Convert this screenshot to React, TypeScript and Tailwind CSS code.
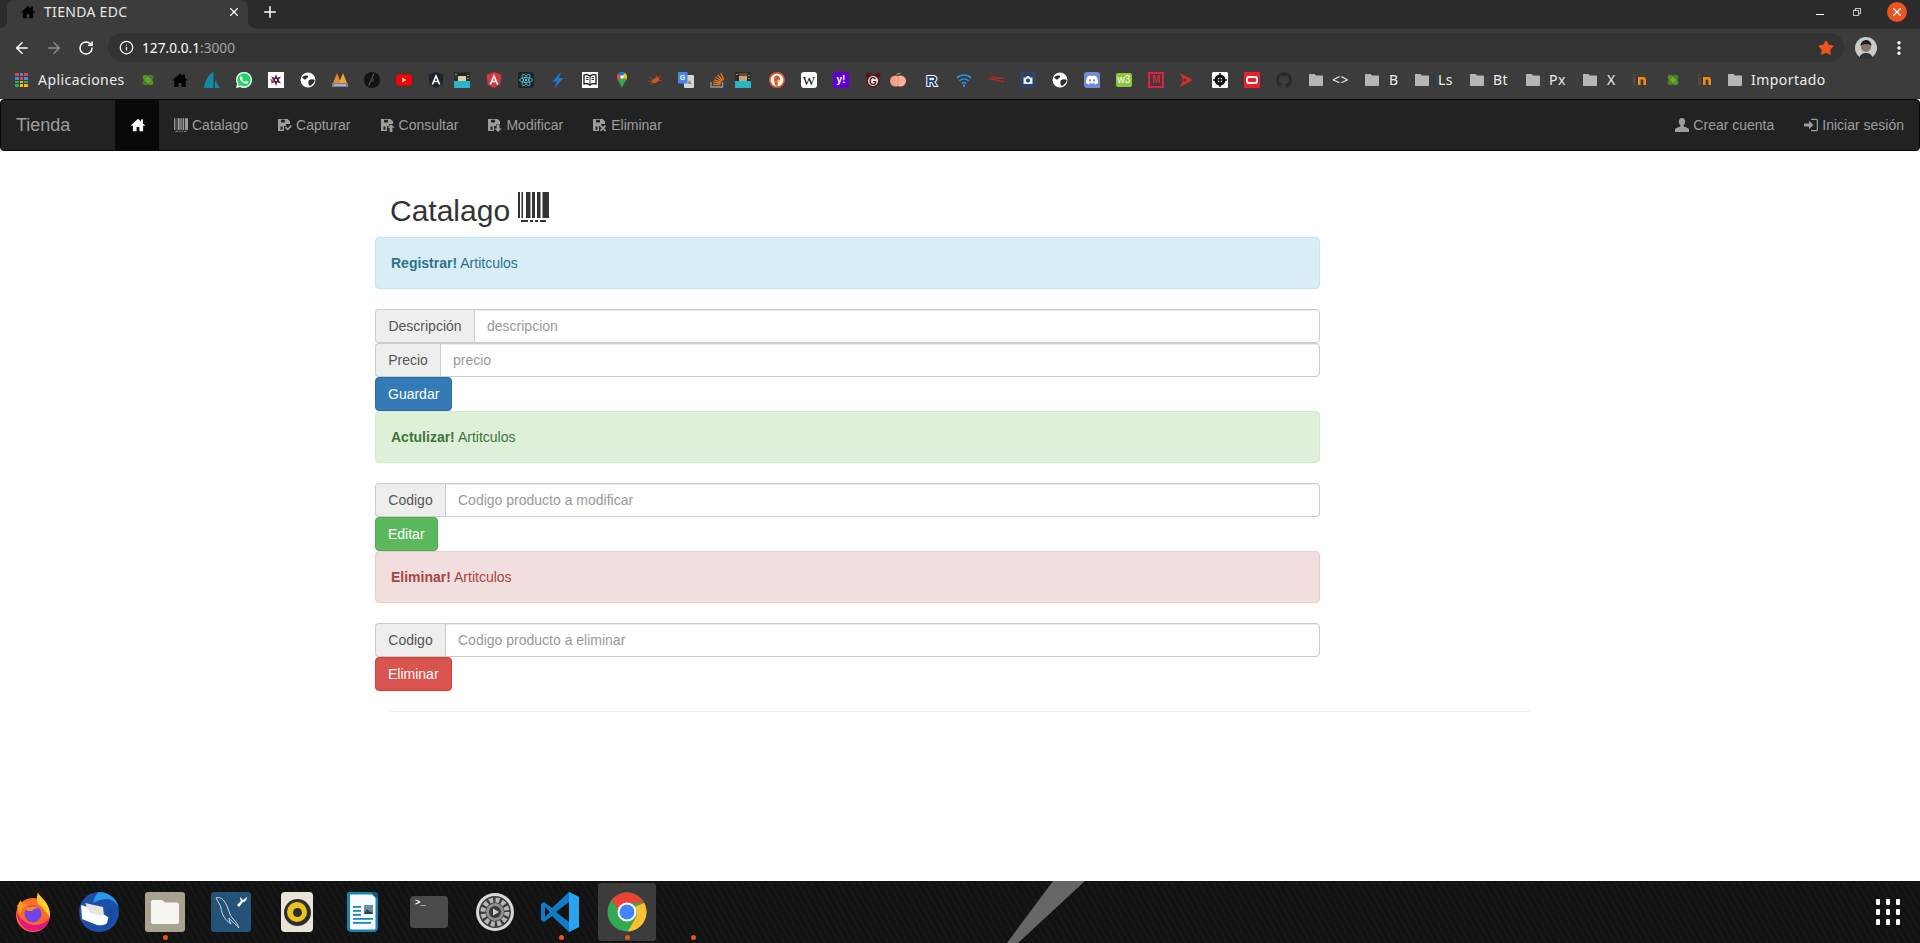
import React from "react";
import { ArrowLeft, ArrowRight, RotateCw, Info, Star, Plus, X, EllipsisVertical } from "lucide-react";
import { SiWhatsapp, SiDiscord, SiGithub } from "react-icons/si";

type IconProps = { className?: string };

/* ---------- glyphicons used by the page ---------- */

const HomeGlyph = ({ className }: IconProps) => (
  <svg viewBox="0 0 14 14" className={className} fill="currentColor">
    <path d="M7 .8 14 7.2l-.9.9-1-.9v6H8.4V9H5.6v4.2H1.9v-6l-1 .9L0 7.2 7 .8z" />
    <rect x="10" y="1.4" width="2" height="3.4" />
  </svg>
);

const BarcodeGlyph = ({ className }: IconProps) => (
  <svg viewBox="0 0 31 30" className={className} fill="currentColor">
    <rect x="0" y="0" width="2" height="26" />
    <rect x="3.5" y="0" width="1.5" height="26" />
    <rect x="8" y="0" width="4.5" height="26" />
    <rect x="14" y="0" width="3" height="26" />
    <rect x="19" y="0" width="3.5" height="26" />
    <rect x="24.5" y="0" width="6.5" height="26" />
    <rect x="3" y="28" width="7" height="2" />
    <rect x="12" y="28" width="3" height="2" />
    <rect x="17" y="28" width="3" height="2" />
    <rect x="22" y="28" width="6" height="2" />
  </svg>
);

const Floppy = ({ className, mark }: IconProps & { mark: React.ReactNode }) => (
  <svg viewBox="0 0 14 14" className={className} fill="currentColor">
    <path d="M0 1h9.5L12 3.2V6H8V8H6v5H0V1zm3 .8v2.7h4V1.8H3zM2.5 8.500v3.3h2V8.500h-2z" fillRule="evenodd" />
    {mark}
  </svg>
);

const UserGlyph = ({ className }: IconProps) => (
  <svg viewBox="0 0 14 14" className={className} fill="currentColor">
    <path d="M7 0c2 0 3.2 1.5 3.2 3.6 0 1.6-.7 3-1.6 3.8v1.1c1.6.7 4.4 1.4 5.4 2.6V14H0v-2.9c1-1.2 3.8-1.9 5.4-2.6V7.4C4.5 6.6 3.8 5.2 3.8 3.6 3.8 1.5 5 0 7 0z" />
  </svg>
);

const LoginGlyph = ({ className }: IconProps) => (
  <svg viewBox="0 0 14 14" className={className} fill="currentColor">
    <path d="M5 2.8 9.4 7 5 11.2V8.6H0V5.4h5V2.8z" />
    <path d="M7 .8h5.2c1 0 1.8.8 1.8 1.8v8.800c0 1-.8 1.800-1.800 1.800H7v-1.200h5c.5 0 .8-.3.8-.8V2.800c0-.5-.3-.8-.8-.8H7V.8z" />
  </svg>
);

const navItems = [
  { label: "Catalago", icon: <BarcodeGlyph className="h-[14px] w-[14px]" /> },
  {
    label: "Capturar",
    icon: <Floppy className="h-[14px] w-[14px]" mark={<path d="M6.8 9.7 8 8.5l1.700 1.700L12.800 7 14 8.200l-4.300 4.400-2.900-2.900z" />} />,
  },
  {
    label: "Consultar",
    icon: <Floppy className="h-[14px] w-[14px]" mark={<path d="M10 6.200l3.700 3.600H11.400V14H8.600V9.800H6.300L10 6.200z" />} />,
  },
  {
    label: "Modificar",
    icon: <Floppy className="h-[14px] w-[14px]" mark={<path d="M10 14l-3.700-3.600h2.300V6.200h2.800v4.200h2.300L10 14z" />} />,
  },
  {
    label: "Eliminar",
    icon: <Floppy className="h-[14px] w-[14px]" mark={<path d="M6.800 8.200 8 7l2 2 2-2 1.200 1.200-2 2 2 2L12 13.400l-2-2-2 2-1.200-1.200 2-2-2-2z" />} />,
  },
];

/* ---------- favicons of the bookmarks bar ---------- */

const Fav = ({ children }: { children: React.ReactNode }) => (
  <svg viewBox="0 0 16 16" className="h-4 w-4">
    {children}
  </svg>
);

const Clover = () => (
  <Fav>
    <circle cx="5.5" cy="5.5" r="2.8" fill="#558f2a" />
    <circle cx="10.5" cy="5.5" r="2.8" fill="#4a8025" />
    <circle cx="5.5" cy="10.5" r="2.8" fill="#4a8025" />
    <circle cx="10.5" cy="10.5" r="2.8" fill="#558f2a" />
    <path d="M8 4.500 11.500 8 8 11.500 4.500 8z" fill="#6da63a" />
  </Fav>
);

const Globe = () => (
  <Fav>
    <circle cx="8" cy="8" r="7.5" fill="#fff" />
    <path d="M2 5c2-1 4-2 6-1 1 1-1 2-2 3s-2 1-4-2zM9 8c2-1 4-1 6 0-1 3-3 5-5 6-2-1-2-4-1-6z" fill="#2f2f2f" />
  </Fav>
);

const PixelGuy = ({ skin }: { skin: string }) => (
  <Fav>
    <rect x="0" y="0" width="16" height="16" fill="#2d2d2d" />
    <rect x="1" y="2" width="2" height="1" fill="#4caf50" />
    <rect x="13" y="3" width="2" height="1" fill="#4caf50" />
    <rect x="13" y="6" width="2" height="1" fill="#4caf50" />
    <rect x="4" y="1" width="8" height="3" fill={skin === "#caa27f" ? "#6a4a32" : "#222"} />
    <rect x="4" y="4" width="8" height="5" fill={skin} />
    <rect x="0" y="9" width="16" height="7" fill="#29b6c8" />
  </Fav>
);

const InLogo = () => (
  <Fav>
    <rect x="1" y="5" width="2.5" height="8" fill="#5a4a3a" />
    <rect x="1" y="2" width="2.5" height="2" fill="#5a4a3a" />
    <path d="M6 13V5h5c2 0 3 1 3 3v5h-2.600V8.300c0-.6-.3-.9-.9-.9H8.600V13H6z" fill="#f08a1d" />
  </Fav>
);

const Folder = () => (
  <svg viewBox="0 0 14 12" className="h-[12px] w-[14px] shrink-0">
    <path d="M1 0h4.500L7 1.500h6c.6 0 1 .4 1 1V11c0 .6-.4 1-1 1H1c-.6 0-1-.4-1-1V1c0-.6.4-1 1-1z" fill="#b6b6b6" />
  </svg>
);

const favicons: { node: React.ReactNode; cls: string }[] = [
  { cls: "", node: <Clover /> },
  {
    cls: "",
    node: (
      <Fav>
        <path d="M8 1.500 16 8.500h-2.300V15H9.600v-4H6.400v4H2.300V8.500H0L8 1.500z" fill="#000" />
        <rect x="11" y="2.5" width="2" height="3.5" fill="#000" />
      </Fav>
    ),
  },
  {
    cls: "",
    node: (
      <Fav>
        <path d="M9.500 0v16H0C1 8 5 2 9.500 0z" fill="#148a9e" />
        <path d="M11 8l5 8h-5V8z" fill="#148a9e" />
      </Fav>
    ),
  },
  {
    cls: "",
    node: (
      <span className="relative flex h-4 w-4 items-center justify-center rounded-full bg-[#25d366]">
        <SiWhatsapp className="h-4 w-4 text-white" />
      </span>
    ),
  },
  {
    cls: "",
    node: (
      <Fav>
        <rect width="16" height="16" fill="#fff" />
        <path d="M8 2l1.300 3.700L13 4.500 10.700 8 13 11.500 9.300 10.300 8 14 6.700 10.300 3 11.500 5.300 8 3 4.500l3.700 1.200z" fill="#4b1f54" />
        <path d="M2 7l5 1-3.500 2.500z" fill="#e2483d" />
        <circle cx="8" cy="8" r="1" fill="#fff" />
      </Fav>
    ),
  },
  { cls: "", node: <Globe /> },
  {
    cls: "",
    node: (
      <Fav>
        <path d="M5 1 9 11H1z" fill="#e28a2c" />
        <path d="M11 1l4 10H7z" fill="#f2a33a" />
        <rect x="0" y="11" width="16" height="4" fill="#77809a" />
        <rect x="2" y="12.5" width="12" height="1" fill="#d8dbe5" />
      </Fav>
    ),
  },
  {
    cls: "",
    node: (
      <Fav>
        <circle cx="8" cy="8" r="8" fill="#111" />
        <path d="M10.500 2 5 14l-1-.6L9.500 1.500z" fill="#555" />
        <circle cx="8" cy="8" r="2" fill="#3a3a3a" />
      </Fav>
    ),
  },
  {
    cls: "",
    node: (
      <Fav>
        <rect x="0" y="2.5" width="16" height="11" rx="3" fill="#f00" />
        <path d="M6.400 5.700 10.400 8l-4 2.300z" fill="#fff" />
      </Fav>
    ),
  },
  {
    cls: "",
    node: (
      <Fav>
        <path d="M8 0l7.500 2.700-1.200 9.900L8 16l-6.300-3.400L.5 2.700z" fill="#1b2430" />
        <path d="M8 2 3.500 12.500h1.800l.9-2.300h3.600l.9 2.300h1.800L8 2zm-1.200 6.800L8 5.800l1.200 3z" fill="#fff" />
      </Fav>
    ),
  },
  { cls: "-ml-[6px]", node: <PixelGuy skin="#e9c9ac" /> },
  {
    cls: "",
    node: (
      <Fav>
        <path d="M8 0l7.500 2.700-1.200 9.900L8 16l-6.300-3.400L.5 2.700z" fill="#d5373f" />
        <path d="M8 2 3.500 12.500h1.800l.9-2.300h3.600l.9 2.300h1.800L8 2zm-1.200 6.800L8 5.800l1.200 3z" fill="#fff" />
      </Fav>
    ),
  },
  {
    cls: "",
    node: (
      <Fav>
        <rect width="16" height="16" rx="2" fill="#232323" />
        <ellipse cx="8" cy="8" rx="6.5" ry="2.5" fill="none" stroke="#53c1de" strokeWidth=".8" />
        <ellipse cx="8" cy="8" rx="6.5" ry="2.5" fill="none" stroke="#53c1de" strokeWidth=".8" transform="rotate(60 8 8)" />
        <ellipse cx="8" cy="8" rx="6.5" ry="2.5" fill="none" stroke="#53c1de" strokeWidth=".8" transform="rotate(120 8 8)" />
        <circle cx="8" cy="8" r="1.3" fill="#53c1de" />
      </Fav>
    ),
  },
  {
    cls: "",
    node: (
      <Fav>
        <path d="M11 0 2.500 9.500H7L4.500 16 13.500 6H9z" fill="#1a78d6" />
      </Fav>
    ),
  },
  {
    cls: "",
    node: (
      <Fav>
        <rect width="16" height="16" fill="#fff" />
        <path d="M8 4C6.500 2.500 4 2.500 2 3v9c2-.5 4.500-.5 6 1 1.500-1.500 4-1.500 6-1V3c-2-.5-4.500-.5-6 1z" fill="none" stroke="#000" strokeWidth="1.2" />
        <path d="M8 4v9M4 5.500h2.500M4 7.500h2.500M9.500 5.500H12M9.500 7.500H12" stroke="#000" strokeWidth=".8" />
      </Fav>
    ),
  },
  {
    cls: "",
    node: (
      <Fav>
        <path d="M8 0C5 0 3 2.300 3 5c0 3.500 3.500 6 5 11 1.500-5 5-7.500 5-11 0-2.700-2-5-5-5z" fill="#34a853" />
        <path d="M4 1.800C5 .7 6.400 0 8 0c1 0 2 .3 2.800.9L8 5z" fill="#1a73e8" />
        <path d="M3 5c0-1.200.4-2.300 1-3.200L8 5l-3.700 3.300C3.500 7.300 3 6.200 3 5z" fill="#ea4335" />
        <path d="M10.800.9C12.100 1.800 13 3.300 13 5c0 .9-.2 1.700-.6 2.500L8 5z" fill="#fbbc04" />
        <circle cx="8" cy="5" r="1.8" fill="#fff" />
      </Fav>
    ),
  },
  {
    cls: "",
    node: (
      <Fav>
        <path d="M6 8.500c2-2 3-3 6-3.500 1 .5 1.500 1.500 1 3-1 2-4 4-6 3-1-.5-1.500-1.500-1-2.500z" fill="#d4541c" />
        <path d="M3 5l4 3M2 9l4 .5M4 13l3-2.500M10 3l1 2.500M15 4l-3 1.500M16 9l-3-.5" stroke="#b5491a" strokeWidth=".8" />
      </Fav>
    ),
  },
  {
    cls: "",
    node: (
      <Fav>
        <rect x="6" y="3" width="10" height="13" rx="1" fill="#d5d5d5" />
        <path d="M11 8l3 4h-4.500z" fill="#8a8a8a" />
        <path d="M1 0h8.500v11.500H1c-.6 0-1-.4-1-1V1c0-.6.4-1 1-1z" fill="#4a86e8" />
        <text x="4.7" y="8" fontSize="7" fontWeight="700" textAnchor="middle" fill="#fff" fontFamily="Liberation Sans, sans-serif">G</text>
      </Fav>
    ),
  },
  {
    cls: "",
    node: (
      <Fav>
        <path d="M1 10v5h11.500v-5" fill="none" stroke="#9a9a9a" strokeWidth="1.3" />
        <path d="M3 12.500h7.500M3.200 10.200l7.300.8M4 7.800l7 2M5.500 5.200l6.300 3.800M7.800 3l5 5.500M10.700 1l3 6.500" stroke="#e8751a" strokeWidth="1.3" fill="none" />
      </Fav>
    ),
  },
  { cls: "-ml-[7px]", node: <PixelGuy skin="#caa27f" /> },
  {
    cls: "ml-[2px]",
    node: (
      <Fav>
        <circle cx="8" cy="8" r="8" fill="#de5833" />
        <circle cx="8" cy="8" r="6.3" fill="#fff" />
        <path d="M5.500 4.500c1.500-1.500 4-1 5 .5.500 1 .5 2 .5 3l-2.500 1 .5 4.500c-1.500.5-2.500 0-3-.5-.5-2.500-1.500-6-.5-8.500z" fill="#de5833" />
        <path d="M8 8.500l3.500-1v2L8 10z" fill="#fdd20a" />
        <circle cx="8.5" cy="6" r=".7" fill="#2d4f8e" />
      </Fav>
    ),
  },
  {
    cls: "",
    node: (
      <span className="flex h-4 w-4 items-center justify-center rounded-[3px] bg-white text-[13px] leading-none tracking-normal text-black [font-family:'Liberation_Serif',serif]">
        W
      </span>
    ),
  },
  {
    cls: "",
    node: (
      <span className="flex h-4 w-4 items-center justify-center bg-[#5f01d1] text-[10px] font-bold leading-none tracking-normal text-white [font-family:'Liberation_Sans',sans-serif]">
        y!
      </span>
    ),
  },
  {
    cls: "",
    node: (
      <Fav>
        <circle cx="3" cy="3" r="2.5" fill="#5a1414" />
        <circle cx="13" cy="3" r="2.5" fill="#5a1414" />
        <circle cx="8" cy="9" r="6.5" fill="#5a1414" />
        <circle cx="8" cy="9" r="5" fill="#eee" />
        <text x="8" y="12.5" fontSize="10" fontWeight="700" textAnchor="middle" fill="#5a1414" fontFamily="Liberation Sans, sans-serif">G</text>
      </Fav>
    ),
  },
  {
    cls: "-ml-[7px]",
    node: (
      <Fav>
        <path d="M6 3c1 -2 3-2.500 5-2-1 1-2 1.800-5 2z" fill="#6fa544" />
        <circle cx="5.5" cy="9" r="5.5" fill="#f79b87" />
        <circle cx="10.5" cy="9" r="5.5" fill="#fbb09b" />
        <path d="M8 3.500v11" stroke="#e87f6b" strokeWidth=".8" />
      </Fav>
    ),
  },
  {
    cls: "ml-[2px]",
    node: (
      <Fav>
        <text
          x="8"
          y="14"
          fontSize="15"
          fontWeight="700"
          textAnchor="middle"
          fill="#1f3b7a"
          stroke="#fff"
          strokeWidth="2"
          paintOrder="stroke"
          fontFamily="Liberation Sans, sans-serif"
        >
          R
        </text>
      </Fav>
    ),
  },
  {
    cls: "",
    node: (
      <Fav>
        <path d="M1 6c4-4 10-4 14 0M3.500 8.800c2.600-2.500 6.400-2.500 9 0M6 11.300c1.200-1 2.800-1 4 0" fill="none" stroke="#2196f3" strokeWidth="1.5" />
        <circle cx="8" cy="13.8" r="1.2" fill="#2196f3" />
      </Fav>
    ),
  },
  {
    cls: "",
    node: (
      <Fav>
        <path d="M0 4l16 2v1L3 6.500 16 9v1.500L0 7V6l8 .8z" fill="#c5222b" />
      </Fav>
    ),
  },
  {
    cls: "",
    node: (
      <Fav>
        <rect width="16" height="16" rx="2" fill="#2f4363" />
        <path d="M3.500 5.500H6L7 4h2l1 1.500h2.500V12h-9z" fill="#e7ebf0" />
        <circle cx="8" cy="8.5" r="2" fill="#2f4363" />
      </Fav>
    ),
  },
  { cls: "", node: <Globe /> },
  {
    cls: "",
    node: (
      <span className="flex h-4 w-4 items-center justify-center rounded-t-[3px] rounded-bl-[3px] bg-[#7289da]">
        <SiDiscord className="h-3 w-3 text-white" />
      </span>
    ),
  },
  {
    cls: "",
    node: (
      <span className="flex h-[14px] w-4 items-center justify-center rounded-[2px] bg-[#8cc63f] text-[10px] leading-none tracking-normal text-white [font-family:'Liberation_Sans',sans-serif]">
        w3
      </span>
    ),
  },
  {
    cls: "",
    node: (
      <span className="flex h-4 w-4 items-center justify-center border-2 border-[#e0203f] text-[10px] font-bold leading-none tracking-normal text-[#e0203f] [font-family:'Liberation_Sans',sans-serif]">
        M
      </span>
    ),
  },
  {
    cls: "",
    node: (
      <Fav>
        <path d="M0 1l13 7-13 7 3-7z" fill="#d5302b" />
        <circle cx="5" cy="8" r="1.5" fill="#3c3c3c" />
      </Fav>
    ),
  },
  {
    cls: "",
    node: (
      <Fav>
        <rect width="16" height="16" rx="1.5" fill="#fff" />
        <circle cx="8" cy="8" r="5.5" fill="#111" />
        <circle cx="8" cy="8" r="2.5" fill="#fff" />
        <path d="M8 1v14M1 8h14" stroke="#111" strokeWidth="1.5" />
      </Fav>
    ),
  },
  {
    cls: "",
    node: (
      <span className="flex h-4 w-4 items-center justify-center bg-[#ee1f2d]">
        <span className="h-2 w-3 rounded-[3px] border-2 border-white" />
      </span>
    ),
  },
  { cls: "", node: <SiGithub className="h-4 w-4 text-[#232a30]" /> },
];

/* ---------- dock icons ---------- */

const Dock = ({ children }: { children: React.ReactNode }) => (
  <svg viewBox="0 0 40 40" className="h-10 w-10">
    {children}
  </svg>
);

const dockIcons: { node: React.ReactNode; dot?: boolean; active?: boolean }[] = [
  {
    node: (
      <Dock>
        <circle cx="20" cy="23" r="17" fill="#ff6b1f" />
        <path d="M3.500 20c1 11 8 19 16.500 19 9 0 16-6 17-15C33 35 12 38 3.500 20z" fill="#e31587" />
        <path d="M25 0c1 5 13 10 12 25-6-6-6-10-12-13-2-4-1-8 0-12z" fill="#ffcb2e" />
        <path d="M4 14c2-3 3-5 4-6 0 3 3 4 6 4-3 3-6 6-6 11-2-2-3-5-4-9z" fill="#ff9a1f" />
        <circle cx="20" cy="22" r="8.5" fill="#7542e5" />
        <path d="M12 17c5-3 10-3 14-1-3 0-6 1-7 3-3 0-5 0-7-2z" fill="#ff8a1f" />
      </Dock>
    ),
  },
  {
    node: (
      <Dock>
        <circle cx="20" cy="20" r="20" fill="#1c4fa8" />
        <path d="M20 0c9 0 17 6 20 15-3-5-8-8-12-8-6 0-10 2-14 4C15 6 17 2 20 0z" fill="#2a9ae8" />
        <path d="M2 13l14 4 13 8 4 1c-3 6-9 8-15 7L3 27z" fill="#fff" />
        <path d="M6 11l18 4 1 9-14-3z" fill="#e4e4e4" />
        <path d="M32 16c4 6 1 16-6 21 3-6 3-14 6-21z" fill="#154a9c" />
      </Dock>
    ),
  },
  {
    dot: true,
    node: (
      <Dock>
        <rect width="40" height="40" rx="3" fill="#a9a28f" />
        <path d="M6 10c0-1 1-2 2-2h9l3 2.500h12c1 0 2 1 2 2V30c0 1-1 2-2 2H8c-1 0-2-1-2-2z" fill="#f7f5f2" />
      </Dock>
    ),
  },
  {
    node: (
      <Dock>
        <rect width="40" height="40" rx="3" fill="#255377" />
        <path d="M5 6c3-1 6 0 8 3 5 6 4 13 10 19 3 2 3 5 5 8-3-4-7-6-10-10 0 2 1 4 2 6-6-4-9-9-10-16-1-4-3-6-5-10z" fill="none" stroke="#c9dcea" strokeWidth="1" />
        <path d="M29 5l3 3 4-3c0 3-2 5-4 5l-4 5-2-2 4-4c-1-2-1-3-1-4z" fill="#fff" />
      </Dock>
    ),
  },
  {
    node: (
      <span className="flex h-10 w-8 items-center justify-center rounded-[4px] bg-[#e8e4d8]">
        <span className="flex h-[27px] w-[27px] items-center justify-center rounded-full bg-[#2e2e2e]">
          <span className="flex h-[20px] w-[20px] items-center justify-center rounded-full bg-[#eec41a]">
            <span className="h-[9px] w-[9px] rounded-full bg-[#2e2e2e]" />
          </span>
        </span>
      </span>
    ),
  },
  {
    node: (
      <Dock>
        <path d="M6 0h24l5 5v31c0 2-2 4-4 4H8c-2 0-4-2-4-4V2c0-1 1-2 2-2z" fill="#1b82b8" />
        <path d="M7 2.500h22L32.500 6v30c0 1-.5 1.500-1.500 1.500H8.500c-1 0-1.500-.5-1.500-1.500z" fill="#f6fafc" />
        <path d="M28 0h5c1 0 2 1 2 2v5z" fill="#115a85" />
        <rect x="21" y="13" width="9" height="9" fill="#6f8da3" />
        <path d="M21 22l3-5 3 3 1-1 2 3z" fill="#26455c" />
        <path d="M10 14h8v1.700h-8zM10 18h8v1.700h-8zM10 22h8v1.700h-8zM10 26h20v1.700H10zM10 30h18v1.700H10z" fill="#1b82b8" />
      </Dock>
    ),
  },
  {
    node: (
      <span className="flex h-8 w-[38px] flex-col rounded-[4px] bg-[#4a4a4a] pl-[5px] pt-[3px] text-[9px] font-bold leading-[9px] text-white [font-family:'Liberation_Mono',monospace]">
        {">_"}
      </span>
    ),
  },
  {
    node: (
      <Dock>
        <circle cx="20" cy="20" r="19" fill="#d8d8d8" />
        <circle cx="20" cy="20" r="16" fill="#3a3a3a" />
        <circle cx="20" cy="20" r="12" fill="none" stroke="#b5b5b5" strokeWidth="5" strokeDasharray="4 2.3" />
        <circle cx="20" cy="20" r="9" fill="#8d8d8d" />
        <circle cx="20" cy="20" r="6" fill="#3a3a3a" />
        <path d="M18 16.500l6 3.500-6 3.500z" fill="#cfcfcf" />
      </Dock>
    ),
  },
  {
    dot: true,
    node: (
      <Dock>
        <path d="M28 0l10 5v30l-10 5-17-16-8 6-3-2v-16l3-2 8 6z" fill="#0e7ccb" />
        <path d="M28 0l10 5v30l-10 5z" fill="#2aa4ef" />
        <path d="M28 10v20l-13-10z" fill="#131313" />
        <path d="M4 15l5 5-5 5z" fill="#131313" />
      </Dock>
    ),
  },
  {
    dot: true,
    active: true,
    node: (
      <Dock>
        <circle cx="20" cy="20" r="19.5" fill="#34a853" />
        <path d="M20 .5c7.500 0 14 4.300 17.300 10.500H20c-4.300 0-7.800 3-8.700 7L4.700 8C8.200 3.500 13.800.5 20 .5z" fill="#ea4335" />
        <path d="M37.300 11c1.400 2.700 2.200 5.800 2.200 9 0 10.500-8.300 19-18.700 19.500L28 27c1.300-1.800 2-4 1.600-7-.3-1.800-1-3.500-2.300-5z" fill="#fbc02d" />
        <circle cx="20" cy="20" r="9.5" fill="#fff" />
        <circle cx="20" cy="20" r="7.5" fill="#4285f4" />
      </Dock>
    ),
  },
  { node: null, dot: true },
];

const Alert = ({ strong, cls }: { strong: string; cls: string }) => (
  <div className={`rounded-[4px] border p-[15px] ${cls}`}>
    <strong className="font-bold">{strong}</strong> Artitculos
  </div>
);

const Field = ({ label, placeholder, cls }: { label: string; placeholder: string; cls: string }) => (
  <div className="flex h-[34px]">
    <span className={`flex shrink-0 items-center justify-center rounded-l-[4px] border border-r-0 border-[#ccc] bg-[#eee] text-[#555] ${cls}`}>{label}</span>
    <input
      placeholder={placeholder}
      className="min-w-0 flex-1 rounded-r-[4px] border border-[#ccc] bg-white px-3 text-[#555] shadow-[inset_0_1px_1px_rgba(0,0,0,0.075)] outline-none placeholder:text-[#999]"
    />
  </div>
);

const Btn = ({ children, cls }: { children: React.ReactNode; cls: string }) => (
  <button className={`block h-[34px] rounded-[4px] border px-3 text-white ${cls}`}>{children}</button>
);

export default function App() {
  return (
    <div className="flex h-[943px] flex-col overflow-hidden bg-white text-[14px] leading-[20px] text-[#333] [font-family:'Liberation_Sans',Arial,sans-serif]">
      {/* tab strip */}
      <div className="flex h-[29px] shrink-0 items-stretch bg-[#2b2b2b] text-[14px] tracking-[0.3px] text-[#e8e8e8] [font-family:'Noto_Sans',sans-serif]">
        <span className="h-2 w-[7px] self-end bg-[radial-gradient(circle_at_0_0,#2b2b2b_7px,#3c3c3c_7px)]" />
        <div className="flex w-[241px] items-center rounded-t-[8px] bg-[#3c3c3c] pb-[5px] pl-[14px]">
          <HomeGlyph className="h-[14px] w-[14px] text-black" />
          <span className="ml-[9px] flex-1">TIENDA EDC</span>
          <X className="mr-[7px] h-[14px] w-[14px] text-white" strokeWidth={2} />
        </div>
        <span className="h-2 w-[7px] self-end bg-[radial-gradient(circle_at_100%_0,#2b2b2b_7px,#3c3c3c_7px)]" />
        <div className="ml-[6px] flex items-center pb-[5px]">
          <Plus className="h-[18px] w-[18px] text-white" strokeWidth={2} />
        </div>
        <div className="ml-auto flex items-center pb-[5px]">
          <span className="mt-[4px] h-px w-2 bg-white" />
          <svg viewBox="0 0 10 10" className="ml-[29px] mr-[26px] h-[8px] w-[8px]" fill="none" stroke="#fff">
            <path d="M.5 3h6.500v6.500H.5zM3 3V.5h6.500V7H7" />
          </svg>
          <span className="mr-[13px] flex h-5 w-5 items-center justify-center rounded-full bg-[#e95420]">
            <X className="h-[14px] w-[14px] text-white" strokeWidth={2} />
          </span>
        </div>
      </div>

      {/* toolbar */}
      <div className="flex h-[33px] shrink-0 items-end bg-[#3c3c3c] text-white">
        <div className="flex h-[29px] flex-1 items-center">
          <span className="ml-[6px] flex w-8 justify-center">
            <ArrowLeft className="h-[18px] w-[18px]" strokeWidth={2} />
          </span>
          <span className="flex w-8 justify-center">
            <ArrowRight className="h-[18px] w-[18px] text-[#8a8a8a]" strokeWidth={2} />
          </span>
          <span className="flex w-8 justify-center">
            <RotateCw className="h-4 w-4" strokeWidth={2.2} />
          </span>
          <div className="ml-[6px] flex h-[29px] flex-1 items-center rounded-full bg-[#333] pl-[11px] pr-[10px]">
            <Info className="h-[15px] w-[15px]" strokeWidth={2} />
            <span className="ml-[8px] flex-1 text-[13.7px] [font-family:'Noto_Sans',sans-serif]">
              127.0.0.1<span className="text-[#a5a5a5]">:3000</span>
            </span>
            <Star className="h-4 w-4 fill-[#e95420] text-[#e95420]" />
          </div>
          <span className="ml-[6px] flex w-8 justify-center">
            <svg viewBox="0 0 22 22" className="h-[22px] w-[22px]">
              <circle cx="11" cy="11" r="11" fill="#c9c9c9" />
              <circle cx="11" cy="10" r="5" fill="#8a7466" />
              <path d="M5.500 9c0-4 3-6 6-6s5 3 5 6c-2-2-7-3-11 0z" fill="#222" />
              <path d="M4 22c1-5 4-6 7-6s6 1 7 6z" fill="#333" />
            </svg>
          </span>
          <span className="ml-px mr-[5px] flex w-8 justify-center">
            <EllipsisVertical className="h-[18px] w-[18px]" strokeWidth={2.5} />
          </span>
        </div>
      </div>

      {/* bookmarks bar */}
      <div className="flex h-[37px] shrink-0 items-center bg-[#3c3c3c] pb-px pl-[15px] text-[14px] tracking-[0.44px] text-[#ececec] [font-family:'Noto_Sans',sans-serif]">
        <span className="grid h-[14px] w-[13px] grid-cols-3 grid-rows-4 gap-px">
          <i className="bg-[#ea4335]" />
          <i className="bg-[#4285f4]" />
          <i className="bg-[#ea4335]" />
          <i className="bg-[#4285f4]" />
          <i className="bg-[#ea4335]" />
          <i className="bg-[#4285f4]" />
          <i className="bg-[#34a853]" />
          <i className="bg-[#fbbc04]" />
          <i className="bg-[#34a853]" />
          <i className="bg-[#34a853]" />
          <i className="bg-[#fbbc04]" />
          <i className="bg-[#fbbc04]" />
        </span>
        <span className="ml-[10px] w-[94px]">Aplicaciones</span>
        {favicons.map((f, i) => (
          <span key={i} className={`flex w-8 shrink-0 justify-center ${f.cls}`}>
            {f.node}
          </span>
        ))}
        <span className="ml-[9px]"><Folder /></span>
        <span className="ml-[9px] w-[16px]">{"<>"}</span>
        <span className="ml-[17px]"><Folder /></span>
        <span className="ml-[10px] w-[8px]">B</span>
        <span className="ml-[18px]"><Folder /></span>
        <span className="ml-[9px] w-[14px]">Ls</span>
        <span className="ml-[18px]"><Folder /></span>
        <span className="ml-[9px] w-[15px]">Bt</span>
        <span className="ml-[18px]"><Folder /></span>
        <span className="ml-[9px] w-[16px]">Px</span>
        <span className="ml-[18px]"><Folder /></span>
        <span className="ml-[10px] w-[8px]">X</span>
        <span className="ml-[9px] flex w-8 justify-center"><InLogo /></span>
        <span className="ml-px flex w-8 justify-center"><Clover /></span>
        <span className="flex w-8 justify-center"><InLogo /></span>
        <span className="ml-[7px]"><Folder /></span>
        <span className="ml-[9px]">Importado</span>
      </div>

      {/* navbar */}
      <nav className="flex h-[52px] shrink-0 items-stretch rounded-[4px] border border-[#080808] bg-[#222] text-[#9d9d9d]">
        <span className="flex w-[114px] items-center pl-[15px] text-[18px]">Tienda</span>
        <span className="flex w-[44px] items-center justify-center bg-[#080808] pl-px text-white">
          <HomeGlyph className="h-[14px] w-[14px]" />
        </span>
        {navItems.map((item) => (
          <span key={item.label} className="flex items-center gap-1 px-[15px]">
            {item.icon}
            {item.label}
          </span>
        ))}
        <span className="ml-auto flex items-center gap-1 px-[15px]">
          <UserGlyph className="h-[14px] w-[14px]" />
          Crear cuenta
        </span>
        <span className="flex items-center gap-1 px-[15px]">
          <LoginGlyph className="h-[14px] w-[14px]" />
          Iniciar sesión
        </span>
      </nav>

      {/* page */}
      <main className="min-h-0 flex-1">
        <div className="mx-auto w-[1170px]">
          <h2 className="flex items-start px-[15px] pb-[10px] pt-[43px] text-[30px] font-normal leading-[33px]">
            Catalago
            <BarcodeGlyph className="-mt-[2px] ml-[8px] h-[30px] w-[31px]" />
          </h2>
          <div className="w-[945px]">
            <Alert strong="Registrar!" cls="border-[#bce8f1] bg-[#d9edf7] text-[#31708f]" />
            <div className="mt-5">
              <Field label="Descripción" placeholder="descripcion" cls="w-[99px]" />
              <Field label="Precio" placeholder="precio" cls="w-[65px]" />
              <Btn cls="border-[#2e6da4] bg-[#337ab7]">Guardar</Btn>
            </div>
            <Alert strong="Actulizar!" cls="border-[#d6e9c6] bg-[#dff0d8] text-[#3c763d]" />
            <div className="mt-5">
              <Field label="Codigo" placeholder="Codigo producto a modificar" cls="w-[70px]" />
              <Btn cls="border-[#4cae4c] bg-[#5cb85c]">Editar</Btn>
            </div>
            <Alert strong="Eliminar!" cls="border-[#ebccd1] bg-[#f2dede] text-[#a94442]" />
            <div className="mt-5">
              <Field label="Codigo" placeholder="Codigo producto a eliminar" cls="w-[70px]" />
              <Btn cls="border-[#d43f3a] bg-[#d9534f]">Eliminar</Btn>
            </div>
          </div>
          <hr className="mx-[15px] mt-5 border-t border-[#eee]" />
        </div>
      </main>

      {/* dock */}
      <footer className="relative flex h-[62px] shrink-0 items-stretch bg-[#131313] bg-[repeating-linear-gradient(60deg,#171717_0px,#171717_2px,#121212_2px,#121212_6px)]">
        {dockIcons.map((d, i) => (
          <div key={i} className="relative flex w-[66px] items-center justify-center">
            {d.active && <span className="absolute left-[4px] top-[2px] h-[58px] w-[58px] rounded-[3px] bg-[#3c3c3c]" />}
            <span className="relative">{d.node}</span>
            {d.dot && <span className="absolute bottom-[3px] left-[31px] h-[5px] w-[5px] rounded-full bg-[#e95420]" />}
          </div>
        ))}
        <svg viewBox="0 0 78 62" className="absolute left-[1007px] top-0 h-[62px] w-[78px]">
          <path d="M46 0H78L11 62H0z" fill="#666" />
        </svg>
        <div className="ml-auto mr-[20px] grid grid-cols-3 content-center gap-x-[6px] gap-y-[4px]">
          {Array.from({ length: 9 }).map((_, i) => (
            <span key={i} className="h-[6px] w-[4px] rounded-[1px] bg-white" />
          ))}
        </div>
      </footer>
    </div>
  );
}
